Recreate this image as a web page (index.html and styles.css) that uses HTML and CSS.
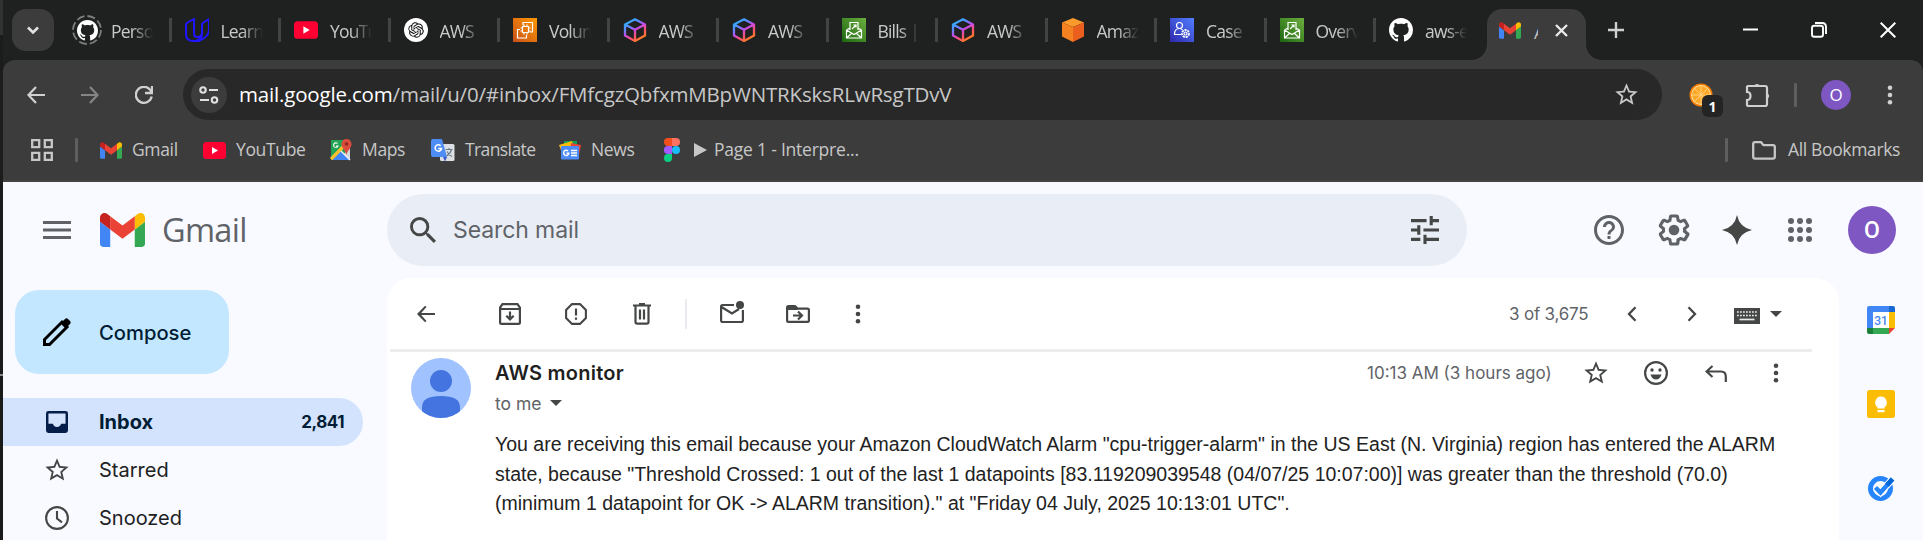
FILE: index.html
```html
<!DOCTYPE html>
<html lang="en">
<head>
<meta charset="utf-8">
<title>Gmail</title>
<link rel="stylesheet" href="styles.css">
</head>
<body>
<svg class="defs" aria-hidden="true">
  <defs>
    <linearGradient id="cubeGrad" x1="0" y1="0" x2=".6" y2="1"><stop offset="0" stop-color="#18b9f5"/><stop offset=".35" stop-color="#5a8cff"/><stop offset=".55" stop-color="#c04df0"/><stop offset=".8" stop-color="#ff4f6e"/><stop offset="1" stop-color="#ff7a2a"/></linearGradient>
    <linearGradient id="orangeGrad" x1="0" y1="1" x2="1" y2="0"><stop offset="0" stop-color="#c8511b"/><stop offset="1" stop-color="#ff9900"/></linearGradient>
    <linearGradient id="greenGrad" x1="0" y1="1" x2="1" y2="0"><stop offset="0" stop-color="#1b660f"/><stop offset="1" stop-color="#6cae3e"/></linearGradient>
    <linearGradient id="blueGrad" x1="0" y1="1" x2="1" y2="0"><stop offset="0" stop-color="#2e27ad"/><stop offset="1" stop-color="#527fff"/></linearGradient>
    <symbol id="github" viewBox="0 0 16 16"><path d="M8 0C3.58 0 0 3.58 0 8c0 3.54 2.29 6.53 5.47 7.59.4.07.55-.17.55-.38 0-.19-.01-.82-.01-1.49-2.01.37-2.53-.49-2.69-.94-.09-.23-.48-.94-.82-1.13-.28-.15-.68-.52-.01-.53.63-.01 1.08.58 1.23.82.72 1.21 1.87.87 2.33.66.07-.52.28-.87.51-1.07-1.78-.2-3.64-.89-3.64-3.95 0-.87.31-1.59.82-2.15-.08-.2-.36-1.02.08-2.12 0 0 .67-.21 2.2.82.64-.18 1.32-.27 2-.27s1.36.09 2 .27c1.53-1.04 2.2-.82 2.2-.82.44 1.1.16 1.92.08 2.12.51.56.82 1.27.82 2.15 0 3.07-1.87 3.75-3.65 3.95.29.25.54.73.54 1.48 0 1.07-.01 1.93-.01 2.2 0 .21.15.46.55.38A8.01 8.01 0 0 0 16 8c0-4.42-3.58-8-8-8z" fill="#fff"/></symbol>
    <symbol id="udacity" viewBox="0 0 24 24"><path d="M1 5.500L9 1v14.500q0 3.500 3 3.500M1 5.500V16q0 7 7.500 7h1Q17 22 17 16V5.500M17 5.500L24 1v11q0 7-10.500 11H8.500M17 5.500V14.500q0 4.500-5 4.500" fill="none" stroke="#2015ff" stroke-width="2"/></symbol>
    <symbol id="yt" viewBox="0 0 23 17"><rect width="23" height="17" rx="3.500" fill="#ff0033"/><path d="M9 5v7l6-3.500z" fill="#fff"/></symbol>
    <symbol id="gpt" viewBox="0 0 24 24"><circle cx="12" cy="12" r="12" fill="#fff"/><path transform="translate(4.200 4.200) scale(.65)" fill="#111" d="M22.2819 9.8211a5.9847 5.9847 0 0 0-.5157-4.9108 6.0462 6.0462 0 0 0-6.5098-2.9A6.0651 6.0651 0 0 0 4.9807 4.1818a5.9847 5.9847 0 0 0-3.9977 2.9 6.0462 6.0462 0 0 0 .7427 7.0966 5.98 5.98 0 0 0 .511 4.9107 6.051 6.051 0 0 0 6.5146 2.9001A5.9847 5.9847 0 0 0 13.2599 24a6.0557 6.0557 0 0 0 5.7718-4.2058 5.9894 5.9894 0 0 0 3.9977-2.9001 6.0557 6.0557 0 0 0-.7475-7.073zm-9.022 12.6081a4.4755 4.4755 0 0 1-2.8764-1.0408l.1419-.0804 4.7783-2.7582a.7948.7948 0 0 0 .3927-.6813v-6.7369l2.02 1.1686a.071.071 0 0 1 .038.052v5.5826a4.504 4.504 0 0 1-4.4945 4.4944zm-9.6607-4.1254a4.4708 4.4708 0 0 1-.5346-3.0137l.142.0852 4.783 2.7582a.7712.7712 0 0 0 .7806 0l5.8428-3.3685v2.3324a.0804.0804 0 0 1-.0332.0615L9.74 19.9502a4.4992 4.4992 0 0 1-6.1408-1.6464zM2.3408 7.8956a4.485 4.485 0 0 1 2.3655-1.9728V11.6a.7664.7664 0 0 0 .3879.6765l5.8144 3.3543-2.0201 1.1685a.0757.0757 0 0 1-.071 0l-4.8303-2.7865A4.504 4.504 0 0 1 2.3408 7.872zm16.5963 3.8558L13.1038 8.364 15.1192 7.2a.0757.0757 0 0 1 .071 0l4.8303 2.7913a4.4944 4.4944 0 0 1-.6765 8.1042v-5.6772a.79.79 0 0 0-.407-.667zm2.0107-3.0231l-.142-.0852-4.7735-2.7818a.7759.7759 0 0 0-.7854 0L9.409 9.2297V6.8974a.0662.0662 0 0 1 .0284-.0615l4.8303-2.7866a4.4992 4.4992 0 0 1 6.6802 4.66zM8.3065 12.863l-2.02-1.1638a.0804.0804 0 0 1-.038-.0567V6.0742a4.4992 4.4992 0 0 1 7.3757-3.4537l-.142.0805L8.704 5.459a.7948.7948 0 0 0-.3927.6813zm1.0976-2.3654l2.602-1.4998 2.6069 1.4998v2.9994l-2.5974 1.4997-2.6067-1.4997Z"/></symbol>
    <symbol id="ec2" viewBox="0 0 24 24"><path fill="url(#orangeGrad)" d="M0 0h24v24H0z"/><g fill="none" stroke="#fff" stroke-width="1.200"><path d="M9.500 8.500h6v6h-6zM11 6.500v2M14 6.500v2M11 14.500v2M14 14.500v2M7.500 10h2M7.500 13h2M15.500 10h2M15.500 13h2M10 7V4.500h9.500V14H17M7 11.500H4.500V20h9v-3"/></g></symbol>
    <symbol id="cube" viewBox="0 0 24 24"><path d="M12 1.300l10 5.200v11l-10 5.400-10-5.400v-11zM2 6.500l10 5.300 10-5.300M12 11.800v11" fill="none" stroke="url(#cubeGrad)" stroke-width="2.300" stroke-linejoin="round"/></symbol>
    <symbol id="bill" viewBox="0 0 24 24"><path fill="url(#greenGrad)" d="M0 0h24v24H0z"/><g fill="none" stroke="#fff" stroke-width="1.200"><path d="M8 12V4.500h8V12M4.500 12v8h15v-8L16 10M4.500 12L8 10M4.500 12l7.500 4.500 7.500-4.500M4.500 20l5-4.500M19.500 20l-5-4.500M10 11l4-4M11.500 7H14v2.500"/></g></symbol>
    <symbol id="box" viewBox="0 0 24 24"><path d="M12 0l11 4.500L12 9 1 4.500z" fill="#fb9a2c"/><path d="M1 4.500L12 9v15L1 18.500z" fill="#f58220"/><path d="M23 4.500L12 9v15l11-5.500z" fill="#ea5f1e"/></symbol>
    <symbol id="case" viewBox="0 0 24 24"><path fill="url(#blueGrad)" d="M0 0h24v24H0z"/><g fill="none" stroke="#fff" stroke-width="1.200"><circle cx="9.500" cy="7.500" r="3"/><path d="M11 16.500H4.500q0-6 5-6 2 0 3 1.500"/><circle cx="15.500" cy="15.500" r="1.500"/><circle cx="15.500" cy="15.500" r="3.500" stroke-dasharray="2.200 .8" stroke-width="1.800"/></g></symbol>
    <symbol id="gmail" viewBox="52 42 88 66"><path fill="#4285f4" d="M58 108h14V74L52 59v43c0 3.320 2.690 6 6 6"/><path fill="#34a853" d="M120 108h14c3.320 0 6-2.690 6-6V59l-20 15"/><path fill="#fbbc04" d="M120 48v26l20-15v-8c0-7.420-8.470-11.650-14.400-7.200"/><path fill="#ea4335" d="M72 74V48l24 18 24-18v26L96 92"/><path fill="#c5221f" d="M52 51v8l20 15V48l-5.600-4.200c-5.940-4.450-14.400-.22-14.400 7.200"/></symbol>
    <symbol id="star" viewBox="0 0 24 24"><path d="M22 9.240l-7.190-.62L12 2 9.190 8.630 2 9.240l5.460 4.730L5.820 21 12 17.270 18.180 21l-1.630-7.030L22 9.240zM12 15.400l-3.760 2.270 1-4.280-3.320-2.880 4.380-.38L12 6.100l1.710 4.040 4.380.38-3.320 2.880 1 4.280L12 15.400z"/></symbol>
    <symbol id="back" viewBox="0 0 18 18"><path d="M18 7.900H4.200l5.300-5.800L8.100.7 0 9l8.100 8.300 1.400-1.400-5.300-5.800H18z"/></symbol>
    <symbol id="dots" viewBox="0 0 6 20"><circle cx="3" cy="2.800" r="2.300"/><circle cx="3" cy="10" r="2.300"/><circle cx="3" cy="17.200" r="2.300"/></symbol>
    <symbol id="caret" viewBox="0 0 12 6"><path d="M0 0h12L6 6z"/></symbol>
  </defs>
</svg>
<div class="screen">
  <div class="edge"></div>
  <div class="window">
    <div class="tabstrip">
      <div class="tabsearch"><svg width="14" height="9" viewBox="0 0 14 9"><path d="M2 1.500l5 5 5-5" fill="none" stroke="#e3e3e3" stroke-width="2.600"/></svg></div>
      <div class="tabs">
        <div class="tab"><span class="ring"><svg class="ringline" viewBox="0 0 30 30"><circle cx="15" cy="15" r="14" fill="none" stroke="#7d7d7d" stroke-width="1.800" stroke-dasharray="8 3"/></svg><svg class="gh" width="21" height="21"><use href="#github"/></svg></span><span class="label">Perso</span></div>
        <div class="tab"><svg class="fav"><use href="#udacity"/></svg><span class="label">Learn</span></div>
        <div class="tab"><svg class="fav"><use href="#yt"/></svg><span class="label">YouTu</span></div>
        <div class="tab"><svg class="fav"><use href="#gpt"/></svg><span class="label">AWS</span></div>
        <div class="tab"><svg class="fav"><use href="#ec2"/></svg><span class="label">Volun</span></div>
        <div class="tab"><svg class="fav"><use href="#cube"/></svg><span class="label">AWS</span></div>
        <div class="tab"><svg class="fav"><use href="#cube"/></svg><span class="label">AWS</span></div>
        <div class="tab"><svg class="fav"><use href="#bill"/></svg><span class="label">Bills |</span></div>
        <div class="tab"><svg class="fav"><use href="#cube"/></svg><span class="label">AWS</span></div>
        <div class="tab"><svg class="fav"><use href="#box"/></svg><span class="label">Amaz</span></div>
        <div class="tab"><svg class="fav"><use href="#case"/></svg><span class="label">Case</span></div>
        <div class="tab"><svg class="fav"><use href="#bill"/></svg><span class="label">Overv</span></div>
        <div class="tab last"><svg class="fav"><use href="#github"/></svg><span class="label">aws-e</span></div>
      </div>
      <div class="tab-active"><svg width="22" height="17"><use href="#gmail"/></svg><span class="sliver">A</span><svg class="tabx" width="13" height="13" viewBox="0 0 13 13"><path d="M1 1l11 11M12 1L1 12" stroke="#e8e8e8" stroke-width="2.400"/></svg></div>
      <svg class="plus" width="16" height="16" viewBox="0 0 16 16"><path d="M8 0v16M0 8h16" stroke="#d0d0d0" stroke-width="2.400"/></svg>
      <div class="controls">
        <svg width="15" height="15" viewBox="0 0 15 15"><path d="M0 6.500h15" stroke="#fff" stroke-width="2"/></svg>
        <svg width="16" height="16" viewBox="0 0 16 16" fill="none" stroke="#fff" stroke-width="1.900"><rect x="1" y="3.800" width="11" height="11" rx="2.300"/><path d="M4 1h7q4 0 4 4v7"/></svg>
        <svg width="16" height="16" viewBox="0 0 16 16"><path d="M.7.700l14.600 14.600M15.300.700L.7 15.300" stroke="#fff" stroke-width="2"/></svg>
      </div>
    </div>
    <div class="chrome">
      <div class="navbar">
        <svg class="nav-back" width="18" height="18" viewBox="0 0 18 18" fill="none" stroke="#d0d0d0" stroke-width="2.200"><path d="M18 9H1.500M9 1L1.500 9 9 17"/></svg>
        <svg class="nav-fwd" width="18" height="18" viewBox="0 0 18 18" fill="none" stroke="#858585" stroke-width="2.200"><path d="M0 9h16.500M9 1l7.500 8L9 17"/></svg>
        <svg class="nav-reload" width="18" height="18" viewBox="0 0 18 18" fill="none" stroke="#d0d0d0" stroke-width="2.300"><path d="M16.700 10.500A8 8 0 1 1 14.800 3.400L16.800 6.500M17 0v7h-7"/></svg>
        <div class="omnibox">
          <span class="siteinfo"><svg width="20" height="18" viewBox="0 0 20 18" fill="none" stroke="#e0e0e0" stroke-width="2.100"><circle cx="4" cy="4" r="2.700"/><path d="M10 4h9M1 14h9"/><circle cx="15.500" cy="14" r="2.700"/></svg></span>
          <span class="url"><span class="host">mail.google.com</span>/mail/u/0/#inbox/FMfcgzQbfxmMBpWNTRKsksRLwRsgTDvV</span>
          <svg class="omni-star" width="27" height="27" fill="#c7c7c7"><use href="#star"/></svg>
        </div>
        <div class="ext">
          <svg width="24" height="24" viewBox="0 0 24 24"><circle cx="12" cy="12" r="11.500" fill="#f57c00"/><circle cx="12" cy="12" r="10" fill="#ffe0a0"/><circle cx="12" cy="12" r="9" fill="#ffa726"/><path d="M12 3v18M3 12h18M5.500 5.500l13 13M18.500 5.500l-13 13" stroke="#ffd180" stroke-width="1"/></svg>
          <span class="badge">1</span>
        </div>
        <svg class="puzzle" width="26" height="26" viewBox="0 0 26 26"><path d="M3 4h17q2 0 2 2v16q0 2-2 2H3q-1 0-1-1v-5q3.500 0 3.500-4T2 10V5q0-1 1-1z" fill="none" stroke="#d0d0d0" stroke-width="2.200"/><path d="M9 4a3.200 3.200 0 0 1 6 0zM22 11a3.200 3.200 0 0 1 0 6z" fill="#d0d0d0"/></svg>
        <span class="vsep nav-sep"></span>
        <span class="profile">O</span>
        <svg class="menu" width="6" height="22" fill="#d0d0d0"><use href="#dots"/></svg>
      </div>
      <div class="bookmarks">
        <svg class="apps" width="22" height="22" viewBox="0 0 22 22" fill="none" stroke="#c7c7c7" stroke-width="2.300"><path d="M1.200 1.200h7v7h-7zM13.800 1.200h7v7h-7zM1.200 13.800h7v7h-7zM13.800 13.800h7v7h-7z"/></svg>
        <span class="vsep bm-sep"></span>
        <span class="bm bm1"><svg width="22" height="17"><use href="#gmail"/></svg><span class="bt">Gmail</span></span>
        <span class="bm bm2"><svg width="23" height="17"><use href="#yt"/></svg><span class="bt">YouTube</span></span>
        <span class="bm bm3"><svg width="22" height="22" viewBox="0 0 22 22"><path d="M1 1h19v20H1z" fill="#23a455"/><path d="M20 8v13H9z" fill="#d5d8dc"/><path d="M2 21L11 12l9 9z" fill="#4285f4"/><path d="M1 20L14 7" stroke="#fbc02d" stroke-width="3.200"/><path d="M11 12l9 9" stroke="#eee" stroke-width="1.500"/><path d="M16.500 0a5 5 0 0 1 5 5c0 4-4 6-5 11-1-5-5-7-5-11a5 5 0 0 1 5-5z" fill="#dd4b3e"/><circle cx="16.500" cy="5" r="1.800" fill="#8c2b20"/><path d="M7.500 4.500A2.300 2.300 0 1 0 8 7H6" fill="none" stroke="#fff" stroke-width="1.100"/></svg><span class="bt">Maps</span></span>
        <span class="bm bm4"><svg width="24" height="23" viewBox="0 0 24 23"><rect x="9" y="5" width="14.500" height="17" rx="1.500" fill="#dcdfe3"/><path d="M12 18h4l-2 4.500z" fill="#3a58c8"/><path d="M2 0h9l5 18H2q-2 0-2-2V2q0-2 2-2z" fill="#4e8df5"/><path d="M9.700 6.800A3.200 3.200 0 1 0 10.500 9.500H7.300" fill="none" stroke="#fff" stroke-width="1.500"/><path d="M14.500 10.500h7M18 9v1.500M20.500 10.500q-1 4-5 6.500M16 12.500q2 4 5 5" fill="none" stroke="#6b7d8a" stroke-width="1.200"/></svg><span class="bt t-trans">Translate</span></span>
        <span class="bm bm5"><svg width="22" height="20" viewBox="0 0 22 20"><path d="M5 1h13v6H5z" fill="#0f9d58"/><path d="M0 5l13-4 2 7-12 5z" fill="#fbbc04"/><path d="M12 3l10 2-2 10-9-3z" fill="#ea4335"/><rect x="2" y="6" width="18" height="13.500" rx="1" fill="#4c8bf5"/><path d="M9 11a2.600 2.600 0 1 0 .8 2.200H7.500M12 10.500h6M12 13h6M12 15.500h6" fill="none" stroke="#fff" stroke-width="1.500"/></svg><span class="bt">News</span></span>
        <span class="bm bm6"><svg width="16" height="24" viewBox="0 0 16 24"><path d="M4 0h4v8H4a4 4 0 0 1 0-8z" fill="#f24e1e"/><path d="M8 0h4a4 4 0 0 1 0 8H8z" fill="#ff7262"/><path d="M4 8h4v8H4a4 4 0 0 1 0-8z" fill="#a259ff"/><circle cx="12" cy="12" r="4" fill="#1abcfe"/><path d="M4 16h4v4a4 4 0 1 1-4-4z" fill="#0acf83"/></svg><svg class="play" width="13" height="14" viewBox="0 0 13 14"><path d="M0 0l13 7-13 7z" fill="#c7c7c7"/></svg><span class="bt t-page">Page 1 - Interpre...</span></span>
        <span class="allbm"><span class="vsep"></span><svg width="24" height="19" viewBox="0 0 24 19"><path d="M3 1.200h6l2.500 3H21q1.800 0 1.800 1.800v9.800q0 1.900-1.800 1.900H3q-1.800 0-1.800-1.900V3q0-1.800 1.800-1.800z" fill="none" stroke="#c7c7c7" stroke-width="2.300"/></svg><span class="bt t-all">All Bookmarks</span></span>
      </div>
    </div>
    <div class="gmail">
      <header class="header">
        <svg class="burger" width="28" height="18" viewBox="0 0 28 18"><path d="M0 1.500h28M0 9h28M0 16.500h28" stroke="#5f6368" stroke-width="2.800"/></svg>
        <svg class="logo" width="45" height="34"><use href="#gmail"/></svg>
        <span class="wordmark">Gmail</span>
        <div class="search">
          <svg width="26" height="26" viewBox="3 3 17.500 17.500" fill="#444746"><path d="M15.500 14h-.79l-.28-.27A6.470 6.470 0 0 0 16 9.500 6.500 6.500 0 1 0 9.500 16c1.610 0 3.090-.59 4.230-1.570l.27.28v.79l5 4.990L20.490 19l-4.990-5zm-6 0C7.010 14 5 11.990 5 9.500S7.010 5 9.500 5 14 7.010 14 9.500 11.990 14 9.500 14z"/></svg>
          <span class="placeholder">Search mail</span>
          <svg class="tune" width="28" height="28" viewBox="3 3 18 18" fill="#444746"><path d="M3 17v2h6v-2H3zM3 5v2h10V5H3zm10 16v-2h8v-2h-8v-2h-2v6h2zM7 9v2H3v2h4v2h2V9H7zm14 4v-2H11v2h10zm-6-4h2V7h4V5h-4V3h-2v6z"/></svg>
        </div>
        <div class="tools">
          <svg width="30" height="30" viewBox="2 2 20 20" fill="#5f6368"><path d="M11 18h2v-2h-2v2zm1-16C6.480 2 2 6.480 2 12s4.480 10 10 10 10-4.480 10-10S17.520 2 12 2zm0 18c-4.410 0-8-3.590-8-8s3.590-8 8-8 8 3.590 8 8-3.590 8-8 8zm0-14c-2.210 0-4 1.790-4 4h2c0-1.100.9-2 2-2s2 .9 2 2c0 2-3 1.750-3 5h2c0-2.250 3-2.500 3-5 0-2.210-1.790-4-4-4z"/></svg>
          <svg width="32" height="32" viewBox="1.500 1.500 21 21"><path d="M13.850 22.250h-3.700c-.74 0-1.360-.54-1.450-1.270l-.27-1.890c-.27-.14-.53-.29-.79-.46l-1.800.72c-.7.260-1.470-.03-1.810-.65L2.200 15.530c-.35-.66-.2-1.440.36-1.880l1.530-1.190c-.01-.15-.02-.3-.02-.46 0-.15.010-.31.020-.46l-1.520-1.190c-.59-.45-.74-1.260-.37-1.880l1.850-3.190c.34-.62 1.110-.9 1.790-.63l1.810.73c.26-.17.520-.32.780-.46l.27-1.910c.09-.7.710-1.250 1.440-1.250h3.700c.74 0 1.360.54 1.450 1.270l.27 1.890c.27.140.53.290.79.460l1.800-.72c.71-.26 1.480.03 1.820.65l1.840 3.180c.36.660.2 1.440-.36 1.880l-1.520 1.190c.1.150.2.300.2.460s-.01.310-.02.460l1.520 1.190c.56.450.72 1.230.37 1.860l-1.860 3.220c-.34.620-1.110.9-1.800.63l-1.800-.72c-.26.170-.52.320-.78.460l-.27 1.910c-.1.680-.72 1.220-1.460 1.220zm-3.230-2h2.760l.37-2.550.53-.22c.44-.18.880-.44 1.340-.78l.45-.34 2.380.96 1.380-2.400-2.030-1.580.07-.56c.03-.26.060-.51.060-.78s-.03-.53-.06-.78l-.07-.56 2.030-1.580-1.390-2.400-2.390.96-.45-.35c-.42-.32-.87-.58-1.330-.77l-.52-.22-.37-2.550h-2.760l-.37 2.550-.53.210c-.44.190-.88.440-1.340.79l-.45.330-2.380-.95-1.390 2.390 2.030 1.580-.07.560a7 7 0 0 0-.06.790c0 .26.020.53.060.780l.07.560-2.030 1.580 1.380 2.400 2.390-.96.450.35c.43.330.86.580 1.330.77l.53.220.38 2.550z" fill="#5f6368"/><circle cx="12" cy="12" r="3.500" fill="#5f6368"/></svg>
          <svg width="30" height="30" viewBox="0 0 30 30"><path d="M15 0q2.500 12.500 15 15-12.500 2.500-15 15Q12.500 17.500 0 15 12.500 12.500 15 0z" fill="#444746"/></svg>
          <svg width="24" height="24" viewBox="0 0 24 24" fill="#5f6368"><g id="r"><circle cx="3" cy="3" r="3"/><circle cx="12" cy="3" r="3"/><circle cx="21" cy="3" r="3"/></g><use href="#r" y="9"/><use href="#r" y="18"/></svg>
          <span class="avatar">O</span>
        </div>
      </header>
      <div class="main">
        <nav class="side">
          <div class="compose"><svg width="28" height="28" viewBox="0 0 28 28"><path d="M1.500 26.500v-5L19 4l5 5L6.500 26.500z" fill="none" stroke="#000" stroke-width="3"/><path d="M17.500 5.500L22 1q1.500-1.300 3 0l2 2q1.300 1.500 0 3l-4.500 4.500z"/></svg><span class="t-compose">Compose</span></div>
          <div class="folder on"><svg width="22" height="22" viewBox="3 3 18 18" fill="#041e49"><path d="M19 3H5a2 2 0 0 0-2 2v14a2 2 0 0 0 2 2h14a2 2 0 0 0 2-2V5a2 2 0 0 0-2-2zm0 10.500h-3.700a3.400 3.400 0 0 1-6.600 0H5V5h14z"/></svg><b class="t-inbox">Inbox</b><b class="count">2,841</b></div>
          <div class="folder"><svg width="28" height="28" fill="#444746" class="wide"><use href="#star"/></svg><span>Starred</span></div>
          <div class="folder"><svg width="24" height="24" viewBox="0 0 24 24" class="clock" fill="none" stroke="#444746" stroke-width="2.100"><circle cx="12" cy="12" r="10.900"/><path d="M12 5v7.500l5 3.800"/></svg><span>Snoozed</span></div>
        </nav>
        <section class="card">
          <div class="actions">
            <svg class="a1" width="18" height="18" fill="#444746"><use href="#back"/></svg>
            <svg class="a2" width="22" height="22" viewBox="0 0 22 22" fill="none" stroke="#444746" stroke-width="2.200"><path d="M1.100 4.500L3.500 1.100h15l2.400 3.400v15q0 1.400-1.400 1.400h-17q-1.400 0-1.400-1.400zM1 6h20"/><path d="M11 8.500v8M7.300 12.700l3.700 3.700 3.700-3.700"/></svg>
            <svg class="a3" width="22" height="22" viewBox="0 0 22 22"><path d="M7 1.100h8L20.900 7v8L15 20.900H7L1.100 15V7z" fill="none" stroke="#444746" stroke-width="2.100"/><path d="M11 5.500v7M11 14.500v2.200" stroke="#444746" stroke-width="2.200"/></svg>
            <svg class="a4" width="18" height="22" viewBox="0 0 18 22" fill="none" stroke="#444746" stroke-width="2.200"><path d="M0 2.500h18M6 1.200h6M2.500 3v16q0 1.700 1.700 1.700h9.600q1.700 0 1.700-1.700V3M7 6.500v10M11 6.500v10"/></svg>
            <span class="asep"></span>
            <svg class="a5" width="24" height="22" viewBox="0 0 24 22"><path d="M14 4H2.500q-1.400 0-1.400 1.400v14.200q0 1.400 1.400 1.400h19q1.400 0 1.400-1.400V9M1.500 6L12 12.500l7-4.500" fill="none" stroke="#444746" stroke-width="2.200"/><circle cx="20" cy="4" r="4" fill="#444746"/></svg>
            <svg class="a6" width="24" height="18" viewBox="0 0 24 18"><path d="M1.100 15.500V2.500q0-1.400 1.400-1.400H9l2.500 2.500h10q1.400 0 1.400 1.400v10.500q0 1.400-1.400 1.400h-19q-1.400 0-1.400-1.400zM7 10.500h9M12 6.500l4 4-4 4" fill="none" stroke="#444746" stroke-width="2.200"/><path d="M1 1h8l3 4H1z" fill="#444746"/></svg>
            <svg class="a7" width="6" height="20" fill="#444746"><use href="#dots"/></svg>
            <span class="pager">3 of 3,675</span>
            <svg class="prev" width="10" height="16" viewBox="0 0 10 16"><path d="M8.500 1.200L2 8l6.500 6.800" fill="none" stroke="#444746" stroke-width="2.300"/></svg>
            <svg class="next" width="10" height="16" viewBox="0 0 10 16"><path d="M1.500 1.200L8 8l-6.500 6.800" fill="none" stroke="#444746" stroke-width="2.300"/></svg>
            <svg class="kbd" width="26" height="16" viewBox="0 0 26 16"><path d="M0 0h26v16H0z" fill="#444746"/><path d="M3 4h20M3 7.500h20" stroke="#e8e8e8" stroke-width="1.500" stroke-dasharray="1.800 1.200"/><path d="M5.500 11.500h15" stroke="#e8e8e8" stroke-width="1.700"/></svg>
            <svg class="kcaret" width="12" height="6" fill="#444746"><use href="#caret"/></svg>
          </div>
          <div class="message">
            <svg class="sender" width="60" height="60" viewBox="0 0 60 60"><clipPath id="clip"><circle cx="30" cy="30" r="30"/></clipPath><g clip-path="url(#clip)"><path d="M0 0h60v60H0z" fill="#a0c2ff"/><circle cx="30" cy="23" r="11" fill="#4374e0"/><path d="M11 60V49q0-11 19-11t19 11v11z" fill="#4374e0"/></g></svg>
            <div class="content">
              <div class="fromline">
                <b class="from">AWS monitor</b>
                <span class="time">10:13 AM (3 hours ago)</span>
                <svg class="m1" width="28" height="28" fill="#444746"><use href="#star"/></svg>
                <svg class="m2" width="24" height="24" viewBox="0 0 24 24"><circle cx="12" cy="12" r="10.900" fill="none" stroke="#444746" stroke-width="2.200"/><circle cx="8" cy="9" r="1.700" fill="#444746"/><circle cx="16" cy="9" r="1.700" fill="#444746"/><path d="M6.500 13.500h11q-1.500 5-5.500 5t-5.500-5z" fill="#444746"/></svg>
                <svg class="m3" width="22" height="17" viewBox="0 0 22 17"><path d="M7.500 1L1.500 6.500l6 5.500M2 6.500h14q4.800 0 4.800 5V17" fill="none" stroke="#444746" stroke-width="2.200"/></svg>
                <svg class="m4" width="6" height="20" fill="#444746"><use href="#dots"/></svg>
              </div>
              <div class="toline"><span class="t-tome">to me</span><svg width="12" height="6" fill="#444746"><use href="#caret"/></svg></div>
              <div class="body">
                <div>You are receiving this email because your Amazon CloudWatch Alarm "cpu-trigger-alarm" in the US East (N. Virginia) region has entered the ALARM</div>
                <div>state, because "Threshold Crossed: 1 out of the last 1 datapoints [83.119209039548 (04/07/25 10:07:00)] was greater than the threshold (70.0)</div>
                <div>(minimum 1 datapoint for OK -&gt; ALARM transition)." at "Friday 04 July, 2025 10:13:01 UTC".</div>
              </div>
            </div>
          </div>
        </section>
        <aside class="addons">
          <svg width="28" height="28" viewBox="0 0 28 28"><path d="M2 0h20v6H6v16H0V2q0-2 2-2z" fill="#4285f4"/><path d="M22 0h4q2 0 2 2v4h-6z" fill="#1967d2"/><path d="M22 6h6v16h-6z" fill="#fbbc04"/><path d="M6 22h16v6H6z" fill="#34a853"/><path d="M0 22h6v6H2q-2 0-2-2z" fill="#188038"/><path d="M22 22h6l-6 6z" fill="#ea4335"/><path d="M6 6h16v16H6z" fill="#fff"/><text x="14" y="18.500" text-anchor="middle" class="cal">31</text></svg>
          <svg width="28" height="28" viewBox="0 0 28 28"><rect width="28" height="28" rx="2.500" fill="#fbbc04"/><path d="M14 6.500a6 6 0 0 1 3.500 10.700V18.500h-7V17.200A6 6 0 0 1 14 6.500zM10.500 20h7v2.200h-7z" fill="#fff"/></svg>
          <svg width="28" height="28" viewBox="0 0 28 28"><circle cx="13.500" cy="14.500" r="10" fill="none" stroke="#2684fc" stroke-width="5"/><path d="M8.500 13.500l5 5L25.500 5" fill="none" stroke="#fff" stroke-width="7"/><path d="M8.500 13.500l5 5L25.500 5" fill="none" stroke="#2684fc" stroke-width="4.500"/><path d="M20 11.200L25.500 5" stroke="#0066da" stroke-width="4.800"/></svg>
        </aside>
      </div>
    </div>
  </div>
</div>
</body>
</html>
```
FILE: styles.css
```css
* { box-sizing: border-box; }
body { margin: 0; overflow: hidden; background: #f9faff; font-family: "Open Sans", "Noto Sans", sans-serif; }
svg { display: block; flex: none; }
span, b { white-space: nowrap; }
.defs { position: absolute; width: 0; height: 0; }
.screen { display: flex; width: 1923px; height: 540px; overflow: hidden; }
.edge { width: 3px; flex: none; background: linear-gradient(#323232 35px, #1c1c1c 35px, #1c1c1c 374px, #8a8a8a 374px, #8a8a8a 376px, #1a1a1a 376px); }
.window { width: 1920px; display: flex; flex-direction: column; background: #1f2120; }

.tabstrip { height: 60px; flex: none; display: flex; align-items: center; }
.tabsearch { width: 42px; height: 42px; margin-left: 9px; border-radius: 14px; background: #3c3c3c; display: flex; align-items: center; justify-content: center; flex: none; }
.tabs { display: flex; margin-left: 8px; width: 1422px; flex: none; }
.tab { width: 109.500px; height: 24px; flex: none; display: flex; align-items: center; padding-left: 13px; border-right: 3px solid #434343; font-size: 17.500px; color: #c9c9c9; }
.tab.last { border-color: transparent; }
.fav { width: 24px; height: 24px; }
.ring { width: 24px; height: 24px; position: relative; flex: none; }
.ringline { position: absolute; left: -3px; top: -3px; width: 30px; height: 30px; }
.gh { position: absolute; left: 1.500px; top: 1.500px; }
.label { margin-left: 12px; width: 42px; overflow: hidden; letter-spacing: -.8px; line-height: 24px; padding-top: 1px; -webkit-mask-image: linear-gradient(90deg, #000 50%, transparent); mask-image: linear-gradient(90deg, #000 50%, transparent); }
.tab-active { position: relative; align-self: flex-end; width: 99px; height: 51px; margin-left: 3px; background: #3c3c3c; border-radius: 15px 15px 0 0; display: flex; align-items: center; padding: 0 0 9px 12px; flex: none; }
.tab-active::before, .tab-active::after { content: ""; position: absolute; bottom: 0; width: 15px; height: 15px; }
.tab-active::before { left: -15px; background: radial-gradient(circle at 0 0, transparent 14.500px, #3c3c3c 15px); }
.tab-active::after { right: -15px; background: radial-gradient(circle at 100% 0, transparent 14.500px, #3c3c3c 15px); }
.sliver { margin-left: 13px; width: 4px; overflow: hidden; font-size: 17px; color: #c9c9c9; padding-top: 4px; }
.tabx { margin-left: 17px; }
.plus { margin-left: 22px; }
.controls { margin-left: auto; display: flex; margin-right: 27px; align-items: center; width: 153px; justify-content: space-between; }

.chrome { height: 122px; flex: none; background: #3c3c3c; border-radius: 12px 12px 0 0; border-bottom: 2px solid #434343; color: #c7c7c7; }
.navbar { height: 69px; display: flex; align-items: center; }
.nav-back { margin-left: 24px; }
.nav-fwd, .nav-reload { margin-left: 36px; }
.omnibox { margin-left: 30px; width: 1479px; height: 51px; border-radius: 26px; background: #282828; display: flex; align-items: center; flex: none; }
.siteinfo { width: 36px; height: 36px; border-radius: 50%; background: #3c3c3c; margin-left: 8px; display: flex; align-items: center; justify-content: center; }
.url { margin-left: 12px; width: 720px; font-size: 20.500px; letter-spacing: -.18px; padding-bottom: 2px; }
.host { color: #fff; }
.omni-star { margin-left: auto; margin-right: 22px; }
.ext { position: relative; margin-left: 27px; width: 24px; height: 24px; }
.badge { position: absolute; left: 13px; top: 12px; width: 21px; height: 22px; border-radius: 6px; background: #242424; color: #fff; font-size: 14px; font-weight: 700; line-height: 24px; text-align: center; }
.puzzle { margin-left: 32px; }
.vsep { width: 3px; height: 24px; background: #5f5f5f; border-radius: 1px; }
.nav-sep { margin-left: 23px; }
.profile { margin-left: 24px; width: 30px; height: 30px; border-radius: 50%; background: #7e57c2; color: #fff; font-size: 17px; line-height: 29px; text-align: center; }
.menu { margin-left: 36px; }
.bookmarks { height: 42px; display: flex; align-items: center; font-size: 17.500px; letter-spacing: -.35px; }
.bt { padding-bottom: 2px; }
.apps { margin-left: 28px; }
.bm-sep { margin-left: 22px; }
.bm { display: flex; align-items: center; flex: none; gap: 10px; }
.bm1 { margin-left: 22px; width: 103px; }
.bm2 { width: 127px; }
.bm3 { width: 101px; }
.bm4 { width: 128px; }
.bm5 { width: 105px; }
.bm6 { gap: 7px; }
.t-trans { letter-spacing: -.6px; }
.t-page { letter-spacing: -.22px; }
.play { margin-left: 7px; }
.allbm { margin-left: auto; display: flex; align-items: center; margin-right: 22px; }
.allbm svg { margin: 0 12px 0 24px; }
.t-all { width: 113px; }

.gmail { flex: 1; background: #f9faff; min-height: 0; font-family: Inter, sans-serif; }
.header { height: 96px; display: flex; align-items: center; }
.burger { margin-left: 40px; }
.logo { margin-left: 29px; }
.wordmark { margin-left: 17px; width: 225px; font-family: "Open Sans", sans-serif; font-size: 32.500px; font-weight: 500; color: #5f6368; letter-spacing: -.7px; padding-bottom: 2px; }
.search { width: 1080px; height: 72px; border-radius: 36px; background: #e9eef6; display: flex; align-items: center; padding: 0 28px 0 23px; flex: none; }
.placeholder { margin-left: 17px; font-size: 23px; letter-spacing: -.1px; color: #5f6368; }
.tune { margin-left: auto; }
.tools { display: grid; grid-template-columns: 66px 64px 62px 64px 80px; justify-items: center; align-items: center; margin-left: 109px; }
.avatar { width: 48px; height: 48px; border-radius: 50%; background: #7e57c2; color: #fff; font: 500 23px/49px Roboto, sans-serif; text-align: center; }
.main { display: flex; height: 262px; }
.side { width: 384px; flex: none; padding-top: 12px; }
.compose { width: 214px; height: 84px; margin: 0 0 24px 12px; border-radius: 24px; background: #c2e7ff; display: flex; align-items: center; padding-left: 28px; color: #001d35; font-size: 20.200px; font-weight: 500; }
.t-compose { margin-left: 28px; }
.folder { height: 48px; width: 360px; display: flex; align-items: center; padding: 0 19px 0 43px; border-radius: 0 24px 24px 0; font-size: 20px; color: #202124; }
.folder.on { background: #d3e3fd; color: #001d35; }
.folder > :nth-child(2) { margin-left: 31px; }
.folder .wide { margin: 0 -3px; }
.folder .clock { margin: 0 -1px; }
.folder .count { margin-left: auto; font-size: 17px; letter-spacing: -.5px; }
.card { width: 1452px; flex: none; border-radius: 24px 24px 0 0; background: #fff; }
.actions { height: 74px; width: 1422px; margin-left: 3px; padding-top: 1px; display: flex; align-items: center; border-bottom: 3px solid #ededed; }
.a1 { margin-left: 27px; }
.a2 { margin-left: 64px; }
.a3 { margin-left: 44px; }
.a4 { margin-left: 46px; }
.asep { margin-left: 34px; width: 2px; height: 30px; background: #e9ebee; }
.a5 { margin-left: 33px; margin-top: -4px; }
.a6 { margin-left: 42px; }
.a7 { margin-left: 45px; }
.pager { margin-left: auto; width: 78px; font-size: 17px; letter-spacing: -.2px; color: #5f6368; }
.prev { margin-left: 40px; }
.next { margin-left: 50px; }
.kbd { margin-left: 37px; margin-top: 4px; }
.kcaret { margin-left: 10px; margin-right: 30px; }
.message { display: flex; padding: 6px 0 0 24px; }
.content { margin-left: 24px; width: 1344px; }
.fromline { height: 30px; display: flex; align-items: center; }
.from { font-size: 20px; font-weight: 600; letter-spacing: .25px; color: #1f1f1f; width: 150px; }
.time { margin-left: 722px; width: 183px; font-size: 17px; color: #5f6368; }
.m1 { margin-left: 32px; }
.m2 { margin-left: 34px; }
.m3 { margin-left: 37px; }
.m4 { margin-left: 46px; }
.toline { height: 30px; display: flex; align-items: center; font-size: 17.500px; color: #5f6368; }
.t-tome { width: 55px; }
.body { margin-top: 12px; font: 19.500px/29.500px "Liberation Sans", Arial, sans-serif; color: #222; white-space: nowrap; }
.addons { flex: 1; padding: 28px 0 0 28px; display: grid; grid-auto-rows: 28px; row-gap: 56px; align-content: start; }
.cal { font: 500 12px Roboto, sans-serif; fill: #4285f4; }
```
